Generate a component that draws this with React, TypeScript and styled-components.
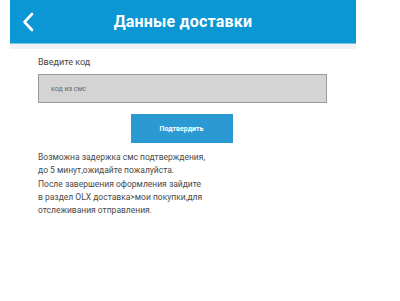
import {FC} from 'react';
import styled, {createGlobalStyle} from 'styled-components';

const GlobalStyle = createGlobalStyle`
	body {
		margin: 0;
		background: #ffffff;
		font-family: Roboto, 'Liberation Sans', Arial, sans-serif;
	}
`;

const Screen = styled.div`
	width: 346px;
	margin-left: 10px;
	display: flex;
	flex-direction: column;
`;

const Header = styled.header`
	height: 43px;
	background-color: #0b97d3;
	display: grid;
	grid-template-columns: 36px 1fr 36px;
	align-items: center;
	border-bottom: 1px solid #7cc3e6;
`;

const BackButton = styled.div`
	display: flex;
	align-items: center;
	justify-content: center;
	height: 100%;
`;

const Title = styled.h1`
	margin: 0;
	text-align: center;
	color: #ffffff;
	font-size: 16px;
	font-weight: 700;
	font-family: Roboto, 'Liberation Sans', sans-serif;
	letter-spacing: 0.2px;
`;

const Strip = styled.div`
	height: 5px;
	background-color: #f2f2f4;
`;

const Content = styled.main`
	padding: 7px 0 0 28px;
	display: flex;
	flex-direction: column;
`;

const Label = styled.label`
	font-size: 9px;
	color: #444;
	line-height: 12px;
	margin-bottom: 6px;
`;

const CodeInput = styled.input`
	box-sizing: border-box;
	width: 289px;
	height: 29px;
	background: #d4d4d4;
	border: 1px solid #9a9a9a;
	padding: 0 12px;
	font-family: inherit;
	font-size: 7px;
	color: #555;
	outline: none;
	&::placeholder {
		color: #6a6a6a;
	}
`;

const ButtonRow = styled.div`
	width: 289px;
	display: flex;
	justify-content: center;
	margin-top: 11px;
`;

const ConfirmButton = styled.button`
	width: 102px;
	height: 29px;
	border: none;
	background-color: #2b99d2;
	color: #ffffff;
	font-family: inherit;
	font-size: 7px;
	font-weight: 700;
	margin-left: -2px;
`;

const Note = styled.p`
	margin: 8px 0 0;
	font-size: 8.5px;
	line-height: 13.3px;
	color: #4a4a4a;
`;

const ChevronIcon: FC = () => (
	<svg width="14" height="22" viewBox="0 0 14 22">
		<path
			d="M11 3 L3.5 11 L11 19"
			fill="none"
			stroke="#ffffff"
			strokeWidth="2.6"
			strokeLinecap="round"
			strokeLinejoin="round"
		/>
	</svg>
);

const App: FC = () => {
	return (
		<>
			<GlobalStyle />
			<Screen>
				<Header>
					<BackButton>
						<ChevronIcon />
					</BackButton>
					<Title>Данные доставки</Title>
					<span />
				</Header>
				<Strip />
				<Content>
					<Label>Введите код</Label>
					<CodeInput placeholder="код из смс" />
					<ButtonRow>
						<ConfirmButton>Подтвердить</ConfirmButton>
					</ButtonRow>
					<Note>
						Возможна задержка смс подтверждения,
						<br />
						до 5 минут,ожидайте пожалуйста.
						<br />
						После завершения оформления зайдите
						<br />
						в раздел OLX доставка&gt;мои покупки,для
						<br />
						отслеживания отправления.
					</Note>
				</Content>
			</Screen>
		</>
	);
};

export default App;
